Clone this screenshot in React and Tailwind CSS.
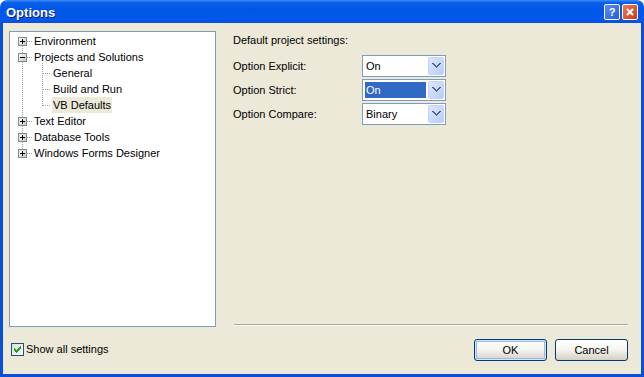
import React from "react";

const font = { fontFamily: '"Liberation Sans", Arial, sans-serif' };

function PlusBox({ minus }) {
  return (
    <svg width="9" height="9" viewBox="0 0 9 9" className="block" shapeRendering="crispEdges">
      <defs>
        <linearGradient id={minus ? "gm" : "gp"} x1="0" y1="0" x2="1" y2="1">
          <stop offset="0" stopColor="#ffffff" />
          <stop offset="1" stopColor="#c6c2b4" />
        </linearGradient>
      </defs>
      <rect x="0.5" y="0.5" width="8" height="8" fill={`url(#${minus ? "gm" : "gp"})`} stroke="#7a8a99" />
      <rect x="2" y="4" width="5" height="1" fill="#000" />
      {!minus && <rect x="4" y="2" width="1" height="5" fill="#000" />}
    </svg>
  );
}

function TreeRow({ level, box, label, selected }) {
  return (
    <div className="flex items-center h-[16px]">
      {level === 0 ? (
        <div className="w-[23px] flex items-center">
          <div className="ml-[8px]">{box ? <PlusBox minus={box === "minus"} /> : null}</div>
        </div>
      ) : (
        <div className="w-[42px]" />
      )}
      <span
        className={`px-[1px] h-[16px] leading-[16px] text-[11px] text-black ${selected ? "bg-[#ece9d8]" : ""}`}
      >
        {label}
      </span>
    </div>
  );
}

function Combo({ value, selected }) {
  return (
    <div className="w-[84px] h-[22px] border border-[#7f9db9] bg-white flex items-center p-[1px]">
      <div className="flex-1 h-full flex items-center pl-[1px] pr-[2px]">
        <span
          className={`h-[16px] leading-[16px] text-[11px] w-full pl-[1px] ${
            selected ? "bg-[#316ac5] text-white" : "text-black"
          }`}
        >
          {value}
        </span>
      </div>
      <div className="w-[16px] h-[18px] rounded-[2px] border border-[#c3d3fd] bg-gradient-to-br from-[#dde7fe] to-[#b9cdfa] flex items-center justify-center">
        <svg width="9" height="6" viewBox="0 0 9 6" shapeRendering="crispEdges">
          <path d="M0 0h2v1h1v1h1v1h1V2h1V1h1V0h2v1H8v1H7v1H6v1H5v1H4V4H3V3H2V2H1V1H0z" fill="#4d6185" />
        </svg>
      </div>
    </div>
  );
}

function XPButton({ children, isDefault }) {
  return (
    <div
      className={`w-[73px] h-[22px] rounded-[3px] border border-[#003c74] flex items-center justify-center text-[11px] text-black bg-gradient-to-b from-[#ffffff] via-[#f4f3ee] to-[#d6d0c5] ${
        isDefault ? "shadow-[inset_0_0_0_1px_#cee7ff,inset_0_0_0_2px_#98b8ea]" : "shadow-[inset_0_-1px_0_#d6d0c5]"
      }`}
    >
      {children}
    </div>
  );
}

export default function App() {
  return (
    <div className="w-[644px] h-[377px] flex flex-col bg-white" style={font}>
      {/* Title bar */}
      <div className="h-[23px] rounded-t-[7px] bg-[linear-gradient(to_bottom,#3d8dfb_0%,#0a5ee9_12%,#0055e5_45%,#0359ef_80%,#0a4fd8_100%)] flex items-center px-[6px]">
        <span className="text-white font-bold text-[13px] [text-shadow:1px_1px_0_#0a1c8a] leading-none mt-[1px]">
          Options
        </span>
        <div className="ml-auto flex items-center gap-[2px] mt-[1px]">
          <div className="w-[16px] h-[16px] rounded-[2px] border border-white bg-gradient-to-br from-[#5a8cf6] to-[#2a5bdc] flex items-center justify-center text-white font-bold text-[11px] leading-none">
            ?
          </div>
          <div className="w-[16px] h-[16px] rounded-[2px] border border-white bg-gradient-to-br from-[#ec7a58] to-[#c83a1a] flex items-center justify-center">
            <svg width="8" height="8" viewBox="0 0 8 8">
              <path d="M1 1L7 7M7 1L1 7" stroke="#fff" strokeWidth="2" />
            </svg>
          </div>
        </div>
      </div>
      {/* Frame */}
      <div className="flex-1 bg-[#0a4fd8] px-[3px] pb-[3px] flex">
        <div className="flex-1 bg-[#ece9d8] flex flex-col pt-[8px] px-[6px]">
          <div className="flex h-[296px]">
            {/* Tree */}
            <div className="relative w-[207px] h-full border border-[#7f9db9] bg-white pt-[1px]">
              <svg
                className="absolute left-0 top-0"
                width="205"
                height="294"
                shapeRendering="crispEdges"
              >
                <g stroke="#a0a0a0" strokeWidth="1" strokeDasharray="1 1">
                  <line x1="12.5" y1="14" x2="12.5" y2="125" />
                  <line x1="17" y1="9.5" x2="22" y2="9.5" />
                  <line x1="17" y1="25.5" x2="22" y2="25.5" />
                  <line x1="17" y1="89.5" x2="22" y2="89.5" />
                  <line x1="17" y1="105.5" x2="22" y2="105.5" />
                  <line x1="17" y1="121.5" x2="22" y2="121.5" />
                  <line x1="32.5" y1="31" x2="32.5" y2="74" />
                  <line x1="33" y1="41.5" x2="41" y2="41.5" />
                  <line x1="33" y1="57.5" x2="41" y2="57.5" />
                  <line x1="33" y1="73.5" x2="41" y2="73.5" />
                </g>
              </svg>
              <div className="relative">
                <TreeRow level={0} box="plus" label="Environment" />
                <TreeRow level={0} box="minus" label="Projects and Solutions" />
                <TreeRow level={1} label="General" />
                <TreeRow level={1} label="Build and Run" />
                <TreeRow level={1} label="VB Defaults" selected />
                <TreeRow level={0} box="plus" label="Text Editor" />
                <TreeRow level={0} box="plus" label="Database Tools" />
                <TreeRow level={0} box="plus" label="Windows Forms Designer" />
              </div>
            </div>
            {/* Right panel */}
            <div className="flex-1 flex flex-col pl-[17px] pr-[7px]">
              <div className="mt-[2px] h-[14px] leading-[14px] text-[11px] text-black">
                Default project settings:
              </div>
              <div className="mt-[8px] flex flex-col gap-[2px]">
                <div className="flex items-center h-[22px]">
                  <span className="w-[129px] text-[11px] text-black">Option Explicit:</span>
                  <Combo value="On" />
                </div>
                <div className="flex items-center h-[22px]">
                  <span className="w-[129px] text-[11px] text-black">Option Strict:</span>
                  <Combo value="On" selected />
                </div>
                <div className="flex items-center h-[22px]">
                  <span className="w-[129px] text-[11px] text-black">Option Compare:</span>
                  <Combo value="Binary" />
                </div>
              </div>
              <div className="mt-auto mb-[1px] ml-[1px] h-[2px] border-t border-t-[#aca899] border-b border-b-white" />
            </div>
          </div>
          {/* Bottom row */}
          <div className="flex-1 flex items-start pt-[12px]">
            <div className="flex items-center ml-[2px] mt-[2px]">
              <div className="w-[13px] h-[13px] border border-[#1c5180] bg-gradient-to-br from-[#dcdcd7] to-white flex items-center justify-center">
                <svg width="7" height="7" viewBox="0 0 7 7" shapeRendering="crispEdges">
                  <path d="M0 2h1v1h1v1h1V3h1V2h1V1h1V0h1v3H6v1H5v1H4v1H3v1H2V6H1V5H0z" fill="#21a121" />
                </svg>
              </div>
              <span className="ml-[2px] text-[11px] text-black">Show all settings</span>
            </div>
            <div className="ml-auto flex gap-[8px] mr-[7px]">
              <XPButton isDefault>OK</XPButton>
              <XPButton>Cancel</XPButton>
            </div>
          </div>
        </div>
      </div>
    </div>
  );
}
